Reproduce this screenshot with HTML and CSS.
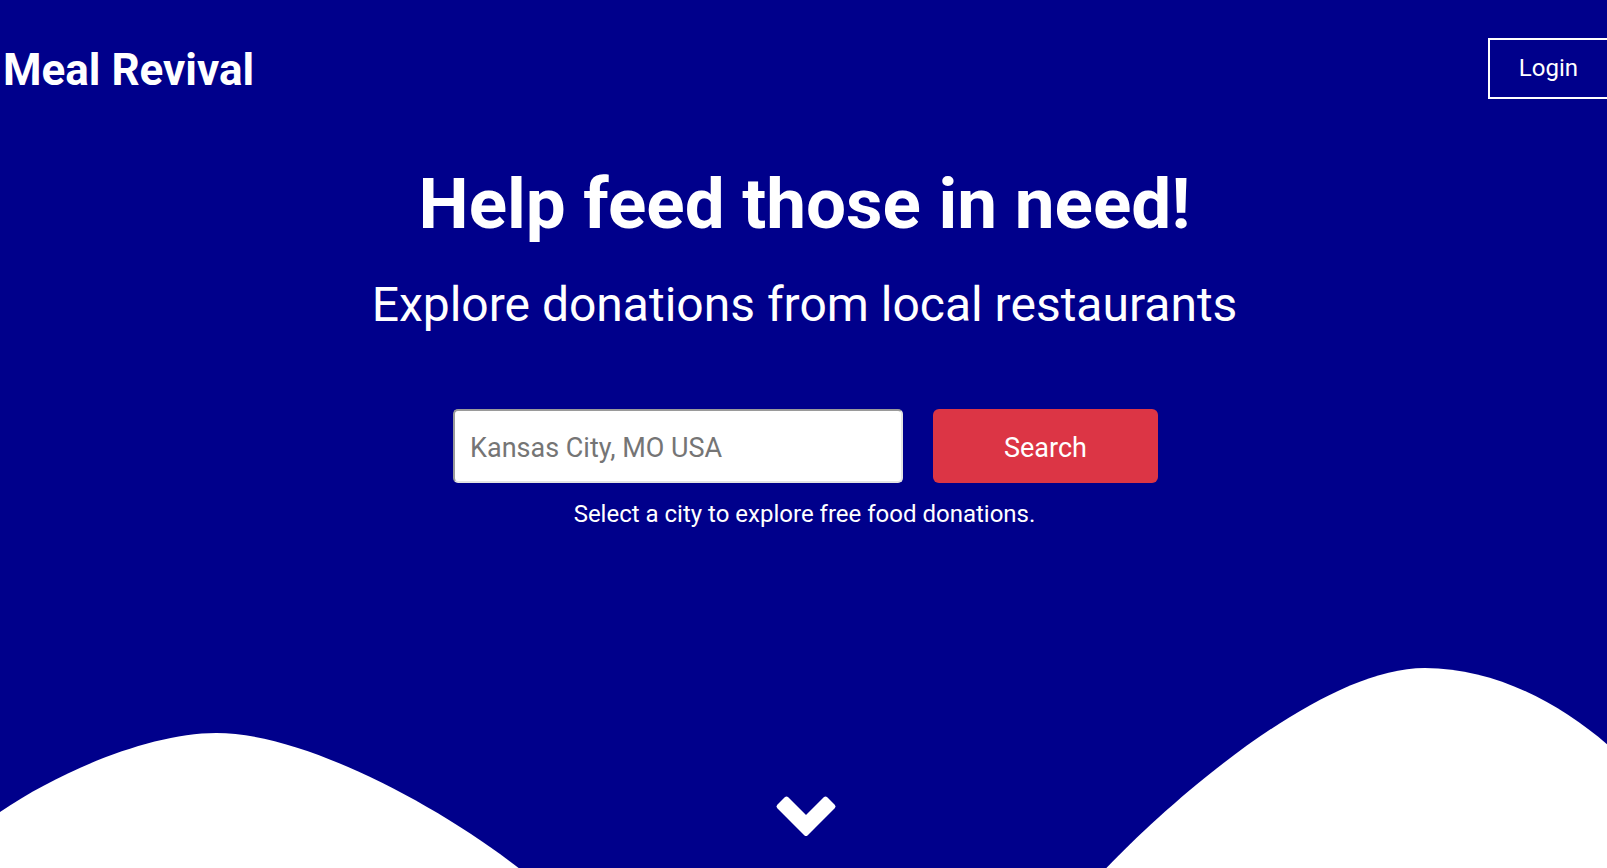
FILE: index.html
```html
<!DOCTYPE html>
<html lang="en">
<head>
<meta charset="utf-8">
<title>Meal Revival</title>
<link rel="stylesheet" href="styles.css">
</head>
<body>
<div class="hero">
  <header class="topbar">
    <div class="brand">Meal Revival</div>
    <button class="login" type="button">Login</button>
  </header>
  <main class="intro">
    <h1 class="title">Help feed those in need!</h1>
    <p class="subtitle">Explore donations from local restaurants</p>
    <form class="search">
      <input class="city" type="text" placeholder="Kansas City, MO USA">
      <button class="search-btn" type="button">Search</button>
    </form>
    <p class="hint">Select a city to explore free food donations.</p>
    <svg class="chevron" viewBox="0 0 62 42" aria-hidden="true">
      <path d="M4.04 10.5 L11.5 3.04 L31 22.54 L50.5 3.04 L57.96 10.5 L31 37.46 Z" fill="#fff" stroke="#fff" stroke-width="5" stroke-linejoin="round"/>
    </svg>
  </main>
  <svg class="waves" viewBox="0 628 1607 240" preserveAspectRatio="none" aria-hidden="true">
    <path d="M0 868 L0 812 C60 771 150 733 216 733 C300 733 430 800 518 868 Z" fill="#fff"/>
    <path d="M1105 868 C1170 800 1320 668 1423 668 C1495 668 1560 705 1607 746 L1607 868 Z" fill="#fff"/>
  </svg>
</div>
</body>
</html>
```

FILE: styles.css
```css
html, body {
  margin: 0;
  padding: 0;
  overflow: hidden;
}

body {
  font-family: Roboto, "Liberation Sans", Arial, sans-serif;
  background: #00008b;
  color: #fff;
}

.hero {
  position: relative;
  height: 100vh;
  margin-right: -2px;
  overflow: hidden;
}

.topbar {
  display: flex;
  justify-content: space-between;
  align-items: center;
  padding: 38px 0 0 3px;
}

.brand {
  margin-top: 3px;
  font-size: 44px;
  font-weight: 700;
  line-height: 53px;
}

.login {
  font-family: Roboto, "Liberation Sans", Arial, sans-serif;
  font-size: 24px;
  line-height: 36px;
  color: #fff;
  background: transparent;
  border: 2px solid #fff;
  border-radius: 0;
  padding: 10px 29px 11px;
  cursor: pointer;
}

.intro {
  display: flex;
  flex-direction: column;
  align-items: center;
  text-align: center;
}

.title {
  margin: 62px 0 0;
  font-size: 71px;
  font-weight: 700;
  line-height: 86px;
}

.subtitle {
  margin: 29px 0 0;
  font-size: 48px;
  font-weight: 400;
  line-height: 58px;
}

.search {
  display: flex;
  gap: 30px;
  margin: 75px 0 0 2px;
}

.city {
  box-sizing: border-box;
  width: 450px;
  height: 74px;
  padding: 3px 15px 0;
  font-family: Roboto, "Liberation Sans", Arial, sans-serif;
  font-size: 27px;
  color: #333;
  background: #fff;
  border: 2px solid;
  border-color: #9a9a9a #e4e4e4 #e4e4e4 #9a9a9a;
  border-radius: 5px;
  outline: none;
}

.city::placeholder {
  color: #757575;
}

.search-btn {
  width: 225px;
  height: 74px;
  padding: 3px 0 0;
  font-family: Roboto, "Liberation Sans", Arial, sans-serif;
  font-size: 27px;
  color: #fff;
  background: #dc3545;
  border: none;
  border-radius: 6px;
  cursor: pointer;
}

.hint {
  margin: 13px 0 0;
  font-size: 24px;
  line-height: 36px;
}

.chevron {
  display: block;
  position: relative;
  z-index: 1;
  width: 62px;
  height: 42px;
  margin: 263.5px 0 0 2px;
  overflow: visible;
}

.waves {
  position: absolute;
  left: 0;
  bottom: 0;
  width: 100%;
  height: 240px;
  display: block;
}
```
